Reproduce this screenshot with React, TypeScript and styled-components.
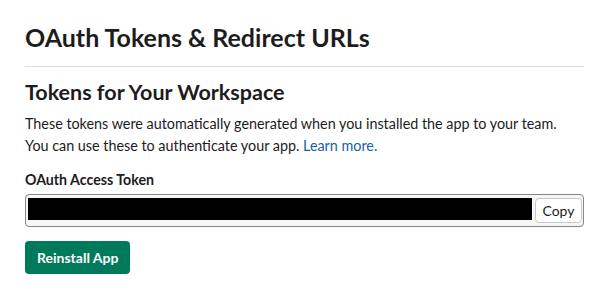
import React from 'react'
import styled, { createGlobalStyle } from 'styled-components'

const GlobalStyle = createGlobalStyle`
  body {
    margin: 0;
    background: #ffffff;
    font-family: Lato, 'Noto Sans', sans-serif;
    color: #1d1c1d;
  }
`

const StyledPage = styled.div`
  padding: 22px 25px 0 25px;
  width: 559px;
`

const StyledHeader = styled.div`
  padding-bottom: 14px;
  border-bottom: 1px solid #dddddd;
`

const StyledTitle = styled.h1`
  margin: 0;
  font-size: 25px;
  line-height: 30px;
  font-weight: 700;
`

const StyledSection = styled.section`
  display: flex;
  flex-direction: column;
  align-items: flex-start;
  padding-top: 12px;
`

const StyledSubtitle = styled.h2`
  margin: 0;
  font-size: 21.5px;
  line-height: 26px;
  font-weight: 700;
`

const StyledText = styled.p`
  margin: 8px 0 0 0;
  font-size: 14.35px;
  line-height: 22px;
`

const StyledLink = styled.a`
  color: #1264a3;
  text-decoration: none;
`

const StyledLabel = styled.div`
  margin-top: 12px;
  font-size: 14.2px;
  line-height: 22px;
  font-weight: 700;
`

const StyledField = styled.div`
  display: flex;
  align-items: stretch;
  gap: 3px;
  align-self: stretch;
  margin-top: 3px;
  height: 33px;
  box-sizing: border-box;
  padding: 3px 1px 3px 2px;
  border: 1px solid #868686;
  border-radius: 4px;
  background: #f6f6f6;
`

const StyledRedacted = styled.div`
  flex: 1 1 auto;
  margin-bottom: 3px;
  background: #000000;
`

const StyledCopy = styled.button`
  flex-shrink: 0;
  width: 47px;
  padding: 0;
  font-family: inherit;
  font-size: 14px;
  color: #1d1c1d;
  background: #ffffff;
  border: 1px solid #c9c9c9;
  border-radius: 4px;
`

const StyledPrimary = styled.button`
  margin-top: 14px;
  height: 33px;
  padding: 0 12px;
  font-family: inherit;
  font-size: 14px;
  font-weight: 700;
  color: #ffffff;
  background: #007a5a;
  border: none;
  border-radius: 4px;
`

const App = () => (
  <>
    <GlobalStyle />
    <StyledPage>
      <StyledHeader>
        <StyledTitle>OAuth Tokens &amp; Redirect URLs</StyledTitle>
      </StyledHeader>
      <StyledSection>
        <StyledSubtitle>Tokens for Your Workspace</StyledSubtitle>
        <StyledText>
          These tokens were automatically generated when you installed the app
          to your team.
          <br />
          You can use these to authenticate your app.{' '}
          <StyledLink href="#">Learn more.</StyledLink>
        </StyledText>
        <StyledLabel>OAuth Access Token</StyledLabel>
        <StyledField>
          <StyledRedacted />
          <StyledCopy>Copy</StyledCopy>
        </StyledField>
        <StyledPrimary>Reinstall App</StyledPrimary>
      </StyledSection>
    </StyledPage>
  </>
)

export default App
